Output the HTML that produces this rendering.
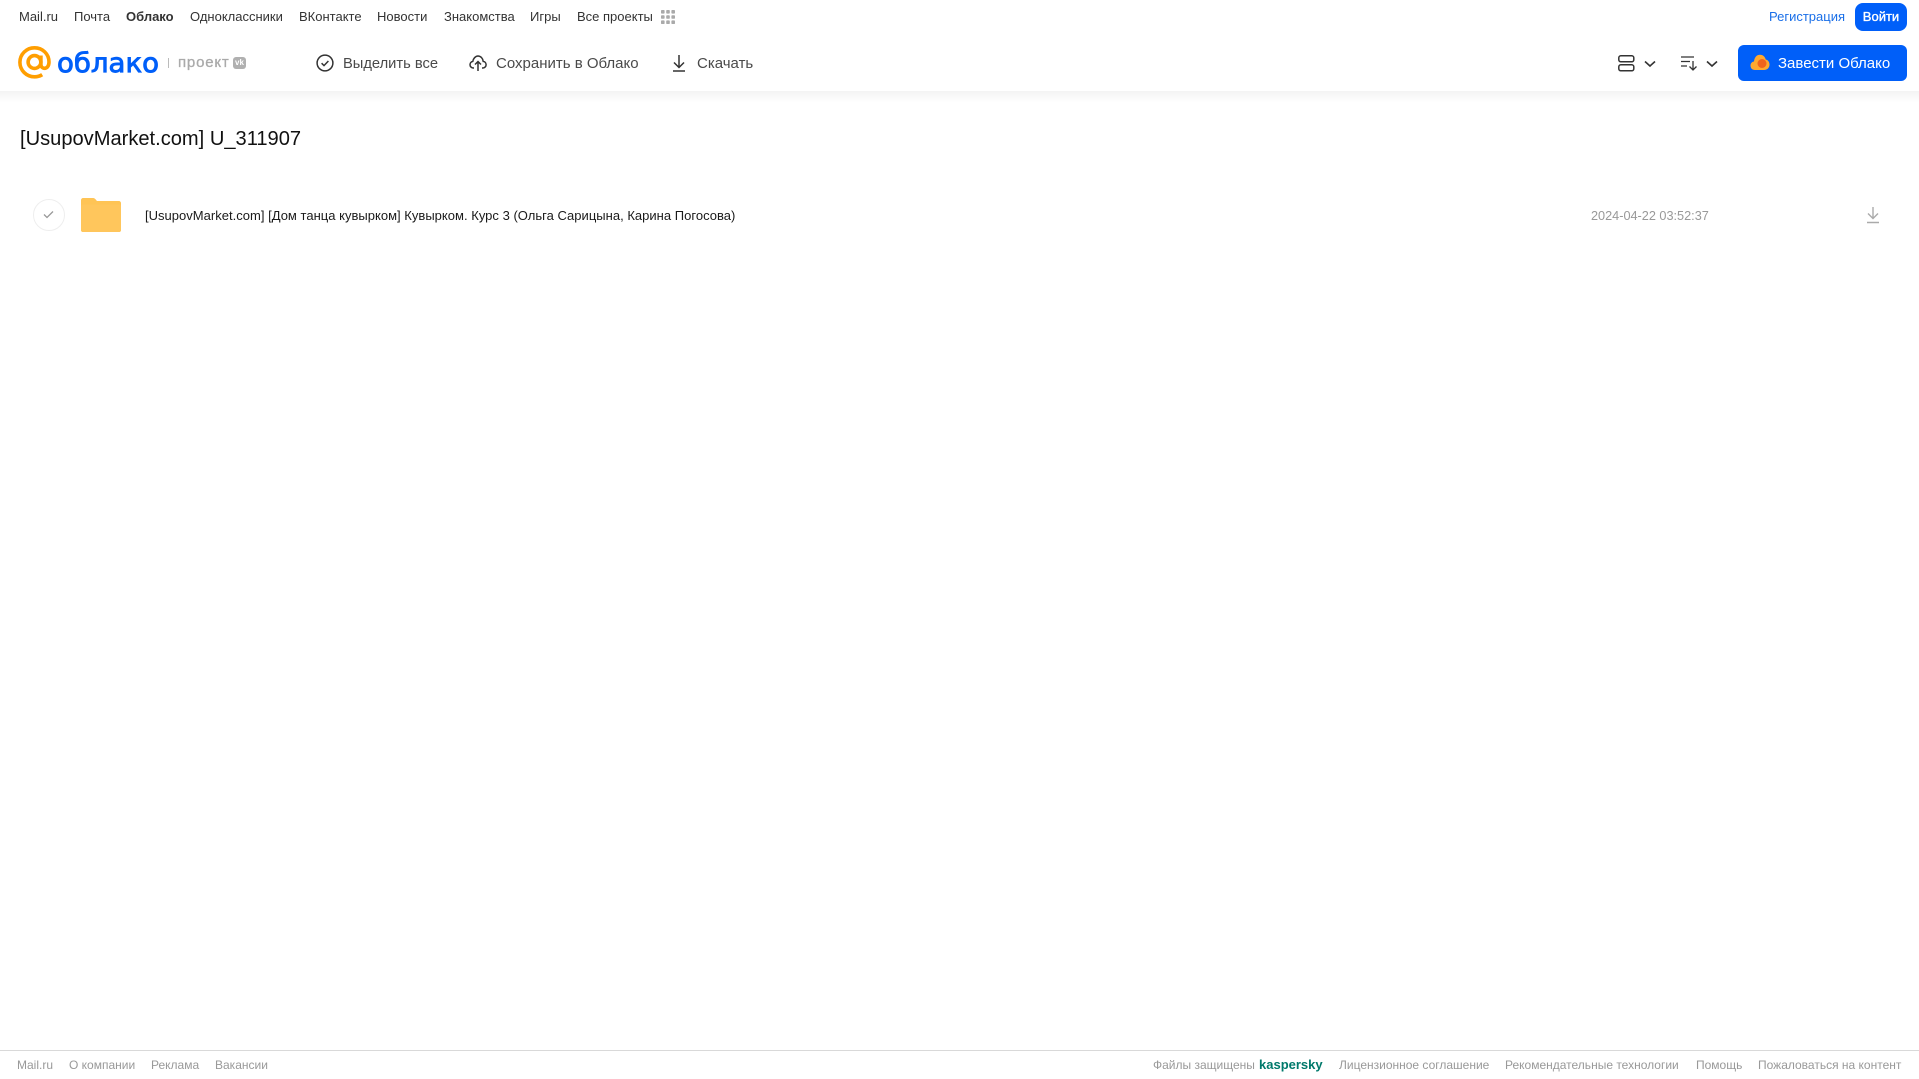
<!DOCTYPE html>
<html lang="ru"><head><meta charset="utf-8"><title>Облако</title>
<style>
html,body{margin:0;padding:0;background:#fff;width:1919px;height:1079px;overflow:hidden}
body{position:relative;font-family:"Liberation Sans",Arial,sans-serif}
.t{position:absolute;white-space:nowrap;line-height:20px}
.n{font-size:13px;color:#333;top:7px}
.b{font-size:15px;color:#4a4a4a;top:54px}
.f{font-size:12px;color:#999;top:1055px}
svg{position:absolute;overflow:visible}
</style></head><body>
<div style="position:absolute;left:0;top:91px;width:1919px;height:12px;background:linear-gradient(#f3f3f3,#fff)"></div>

<span class="t n" style="left:19px">Mail.ru</span>
<span class="t n" style="left:74px">Почта</span>
<span class="t n" style="left:126px;font-weight:bold">Облако</span>
<span class="t n" style="left:190px">Одноклассники</span>
<span class="t n" style="left:299px">ВКонтакте</span>
<span class="t n" style="left:377px">Новости</span>
<span class="t n" style="left:444px">Знакомства</span>
<span class="t n" style="left:530px">Игры</span>
<span class="t n" style="left:577px">Все проекты</span>
<svg style="left:661px;top:10px" width="14" height="14" fill="#aaa"><rect width="3.600" height="3.600" x="0" y="0" rx=".8"/><rect width="3.600" height="3.600" x="5.200" y="0" rx=".8"/><rect width="3.600" height="3.600" x="10.400" y="0" rx=".8"/><rect width="3.600" height="3.600" x="0" y="5.200" rx=".8"/><rect width="3.600" height="3.600" x="5.200" y="5.200" rx=".8"/><rect width="3.600" height="3.600" x="10.400" y="5.200" rx=".8"/><rect width="3.600" height="3.600" x="0" y="10.400" rx=".8"/><rect width="3.600" height="3.600" x="5.200" y="10.400" rx=".8"/><rect width="3.600" height="3.600" x="10.400" y="10.400" rx=".8"/></svg>

<span class="t n" style="left:1769px;color:#1a6fe8">Регистрация</span>
<div style="position:absolute;left:1855px;top:3px;width:52px;height:28px;border-radius:8px;background:#005ff9;color:#fff;font-size:13px;-webkit-text-stroke:.35px #fff;text-align:center;line-height:28px">Войти</div>

<svg style="left:18px;top:46px" width="34" height="34" viewBox="0 0 34 34" fill="none" stroke="#ff9e00" stroke-width="3.600"><circle cx="16.500" cy="16" r="6.400"/><path d="M22.900 9.500v8.800c0 2.600 1.700 4 3.600 4 2.300 0 4.500-2 4.500-6.300C31 7.900 24.500 1.800 16.500 1.800S1.900 8.200 1.900 16.300s6.500 14.500 14.600 14.500c3 0 5.500-.7 7.700-2.100"/></svg>
<svg style="left:56px;top:40px" width="108" height="44"><text x="1" y="32" font-family="'DejaVu Sans',sans-serif" font-size="27" fill="#005ff9" stroke="#005ff9" stroke-width=".9" textLength="102" lengthAdjust="spacingAndGlyphs">облако</text></svg>
<div style="position:absolute;left:168px;top:58px;width:1px;height:10px;background:#bbb"></div>
<span class="t" style="left:178px;top:53px;font-size:15px;color:#aaa;-webkit-text-stroke:.3px #aaa;letter-spacing:.8px">проект</span>
<div style="position:absolute;left:233px;top:57px;width:13px;height:12px;border-radius:3px;background:#b0b0b0;color:#fff;font-size:8px;font-weight:bold;line-height:12px;text-align:center">vk</div>

<svg style="left:316px;top:54px" width="18" height="18" viewBox="0 0 18 18" fill="none" stroke="#333" stroke-width="1.500"><circle cx="9" cy="9" r="7.900"/><path d="M5.600 9.200l2.400 2.400 4.400-4.600"/></svg>
<span class="t b" style="left:343px;font-size:14.700px">Выделить все</span>
<svg style="left:469px;top:54px" width="18" height="18" viewBox="0 0 18 18" fill="none" stroke="#333" stroke-width="1.500"><path d="M5 14H4.500C2.500 14 1 12.500 1 10.700 1 9 2.200 7.700 3.800 7.400 4.200 4.700 6.400 2 9 2c2.700 0 4.800 2.300 5.200 5.400 1.700.2 2.900 1.600 2.900 3.300 0 1.800-1.500 3.300-3.500 3.300H13"/><path d="M9 17V8M6 10.500L9 7.500l3 3"/></svg>
<span class="t b" style="left:496px">Сохранить в Облако</span>
<svg style="left:672px;top:54px" width="14" height="18" viewBox="0 0 14 18" fill="none" stroke="#333" stroke-width="1.500"><path d="M7 1v12M2 8.500l5 5 5-5M1 17h12"/></svg>
<span class="t b" style="left:697px">Скачать</span>

<svg style="left:1618px;top:55px" width="17" height="17" viewBox="0 0 17 17" fill="none" stroke="#333" stroke-width="1.500"><rect x=".8" y=".8" width="15" height="6" rx="2"/><rect x=".8" y="9.800" width="15" height="6" rx="2"/></svg>
<svg style="left:1644px;top:60px" width="12" height="8" fill="none" stroke="#333" stroke-width="1.600"><path d="M1 1.500l5 4.500 5-4.500"/></svg>
<svg style="left:1681px;top:56px" width="17" height="15" viewBox="0 0 17 15" fill="none" stroke="#333" stroke-width="1.300"><path d="M0 1h13M0 5.500h9M0 10h6M12 5v9M8.500 10.500l3.500 3.500 3.500-3.500"/></svg>
<svg style="left:1706px;top:60px" width="12" height="8" fill="none" stroke="#333" stroke-width="1.600"><path d="M1 1.500l5 4.500 5-4.500"/></svg>

<div style="position:absolute;left:1738px;top:45px;width:169px;height:36px;border-radius:6px;background:#005ff9"></div>
<svg style="left:1750px;top:54px" width="20" height="17" viewBox="0 0 20 17"><path d="M5 16C2 16 .5 14 .5 11.500.5 9 2.500 7.500 4 7.500 4.500 3 7 .8 10 .8c3 0 5 2 5.700 4.700C18 6 19.500 8 19.500 10.500 19.500 14 17 16 14 16z" fill="#ffa930"/><circle cx="12" cy="9.500" r="4.500" fill="#f0641e"/></svg>
<span class="t" style="left:1778px;top:54px;font-size:15px;color:#fff">Завести Облако</span>

<span class="t" style="left:20px;top:127px;font-size:20.100px;line-height:24px;color:#111">[UsupovMarket.com] U_311907</span>

<div style="position:absolute;left:33px;top:199px;width:30px;height:30px;border:1px solid #eee;border-radius:50%"></div>
<svg style="left:43px;top:210px" width="11" height="9" fill="none" stroke="#999" stroke-width="1.300"><path d="M1 4.500l3 3 6-6"/></svg>
<svg style="left:81px;top:198px" width="40" height="34" viewBox="0 0 40 34"><path d="M2 0h10c1.500 0 2.500 1 3.500 2.500L16 3h22c1 0 2 1 2 2v27c0 1-1 2-2 2H2c-1 0-2-1-2-2V2C0 1 1 0 2 0z" fill="#ffc455"/><rect y="6.500" width="40" height="27.500" rx="2" fill="#ffc65c"/></svg>
<span class="t" style="left:145px;top:206px;font-size:13px;color:#1a1a1a;letter-spacing:.015px">[UsupovMarket.com] [Дом танца кувырком] Кувырком. Курс 3 (Ольга Сарицына, Карина Погосова)</span>
<span class="t" style="left:1591px;top:206px;font-size:12.700px;color:#999">2024-04-22 03:52:37</span>
<svg style="left:1866px;top:206px" width="14" height="18" viewBox="0 0 14 18" fill="none" stroke="#aaa" stroke-width="1.400"><path d="M7 1v11M2 7.500l5 5 5-5M1 16.500h12"/></svg>

<div style="position:absolute;left:0;top:1050px;width:1919px;height:1px;background:#d9d9d9"></div>
<span class="t f" style="left:17px">Mail.ru</span>
<span class="t f" style="left:69px">О компании</span>
<span class="t f" style="left:151px">Реклама</span>
<span class="t f" style="left:215px">Вакансии</span>
<span class="t f" style="left:1153px">Файлы защищены</span>
<span class="t f" style="left:1259px;color:#00796b;font-weight:bold;font-size:13px">kaspersky</span>
<span class="t f" style="left:1339px">Лицензионное соглашение</span>
<span class="t f" style="left:1505px">Рекомендательные технологии</span>
<span class="t f" style="left:1696px">Помощь</span>
<span class="t f" style="left:1758px">Пожаловаться на контент</span>
</body></html>
